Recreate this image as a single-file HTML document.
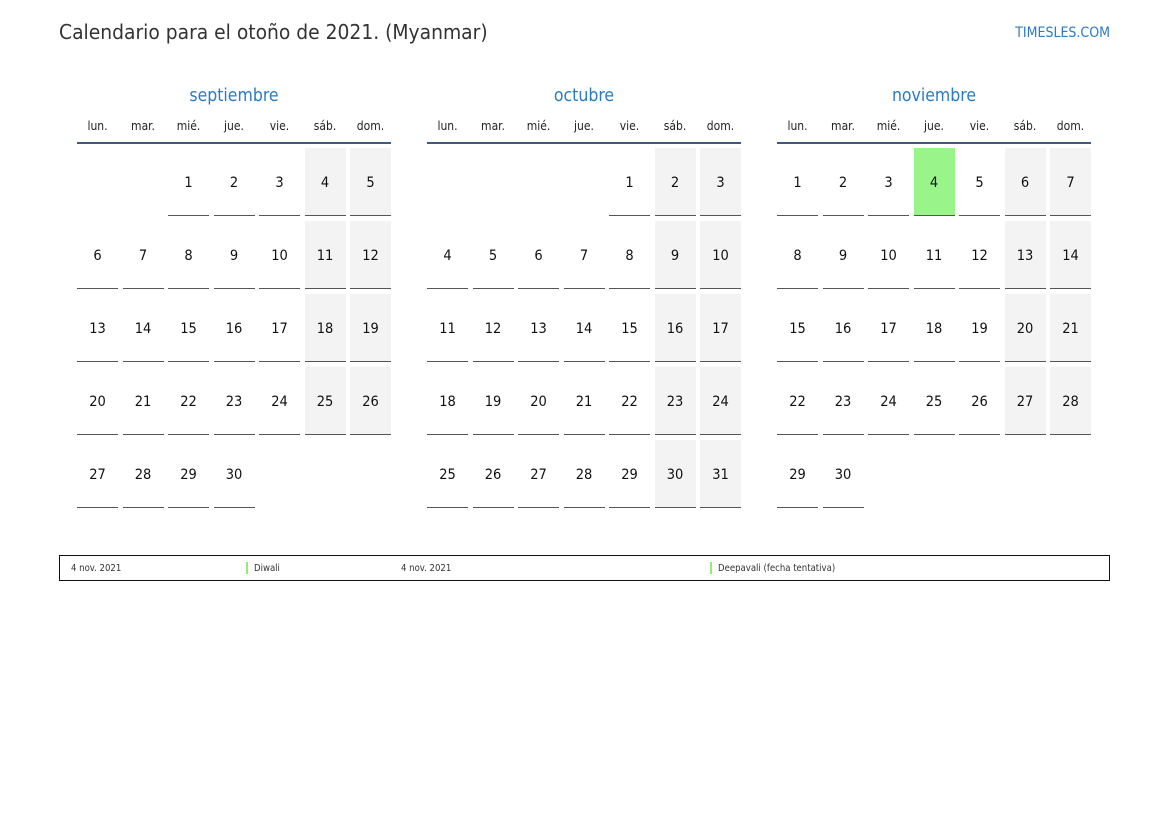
<!DOCTYPE html>
<html><head><meta charset="utf-8"><style>
body{margin:0;width:1169px;height:827px;background:#fff;position:relative;font-family:"DejaVu Sans Condensed","DejaVu Sans","Liberation Sans",sans-serif;overflow:hidden}
.t{position:absolute;left:59px;top:20px;font-size:20.8px;color:#333;white-space:nowrap}
.brand{position:absolute;right:59px;top:25px;font-size:14px;color:#2a7bc4}
.m{position:absolute;top:82px;width:314px}
.mn{text-align:center;font-size:17.5px;color:#2a7bc4;height:24px;line-height:24px;padding-top:2px;box-sizing:border-box}
.wd{display:grid;grid-template-columns:repeat(7,41px);column-gap:4.5px;margin-top:10px;font-size:12px;color:#222;text-align:center;height:20px;line-height:20px}
.hl{height:2px;background:#3d5a85;margin-top:6px}
.g{display:grid;grid-template-columns:repeat(7,41px);column-gap:4.5px;row-gap:5px;margin-top:4px;grid-auto-rows:68px}
.g div{box-sizing:border-box;border-bottom:1.5px solid #555;display:flex;align-items:center;justify-content:center;font-size:14.5px;color:#111;padding-top:3px}
.g div.e{border:none}
.g div.w{background:#f3f3f3}
.g div.h{background:#99f58a}
.leg{position:absolute;left:59px;top:555px;width:1049px;height:24px;border:1px solid #111;font-size:9.5px;color:#333}
.leg span{position:absolute;top:7px;white-space:nowrap}
.bar{position:absolute;top:6px;width:2px;height:12px;background:#8ef07a}
</style></head><body>
<div class="t">Calendario para el otoño de 2021. (Myanmar)</div>
<div class="brand">TIMESLES.COM</div>

<div class="m" style="left:77px">
<div class="mn">septiembre</div>
<div class="wd"><span>lun.</span><span>mar.</span><span>mié.</span><span>jue.</span><span>vie.</span><span>sáb.</span><span>dom.</span></div>
<div class="hl"></div>
<div class="g">
<div class="e"></div><div class="e"></div><div>1</div><div>2</div><div>3</div><div class="w">4</div><div class="w">5</div>
<div>6</div><div>7</div><div>8</div><div>9</div><div>10</div><div class="w">11</div><div class="w">12</div>
<div>13</div><div>14</div><div>15</div><div>16</div><div>17</div><div class="w">18</div><div class="w">19</div>
<div>20</div><div>21</div><div>22</div><div>23</div><div>24</div><div class="w">25</div><div class="w">26</div>
<div>27</div><div>28</div><div>29</div><div>30</div>
</div></div>

<div class="m" style="left:427px">
<div class="mn">octubre</div>
<div class="wd"><span>lun.</span><span>mar.</span><span>mié.</span><span>jue.</span><span>vie.</span><span>sáb.</span><span>dom.</span></div>
<div class="hl"></div>
<div class="g">
<div class="e"></div><div class="e"></div><div class="e"></div><div class="e"></div><div>1</div><div class="w">2</div><div class="w">3</div>
<div>4</div><div>5</div><div>6</div><div>7</div><div>8</div><div class="w">9</div><div class="w">10</div>
<div>11</div><div>12</div><div>13</div><div>14</div><div>15</div><div class="w">16</div><div class="w">17</div>
<div>18</div><div>19</div><div>20</div><div>21</div><div>22</div><div class="w">23</div><div class="w">24</div>
<div>25</div><div>26</div><div>27</div><div>28</div><div>29</div><div class="w">30</div><div class="w">31</div>
</div></div>

<div class="m" style="left:777px">
<div class="mn">noviembre</div>
<div class="wd"><span>lun.</span><span>mar.</span><span>mié.</span><span>jue.</span><span>vie.</span><span>sáb.</span><span>dom.</span></div>
<div class="hl"></div>
<div class="g">
<div>1</div><div>2</div><div>3</div><div class="h">4</div><div>5</div><div class="w">6</div><div class="w">7</div>
<div>8</div><div>9</div><div>10</div><div>11</div><div>12</div><div class="w">13</div><div class="w">14</div>
<div>15</div><div>16</div><div>17</div><div>18</div><div>19</div><div class="w">20</div><div class="w">21</div>
<div>22</div><div>23</div><div>24</div><div>25</div><div>26</div><div class="w">27</div><div class="w">28</div>
<div>29</div><div>30</div>
</div></div>

<div class="leg">
<span style="left:11px">4 nov. 2021</span>
<div class="bar" style="left:186px"></div><span style="left:194px">Diwali</span>
<span style="left:341px">4 nov. 2021</span>
<div class="bar" style="left:650px"></div><span style="left:658px">Deepavali (fecha tentativa)</span>
</div>
</body></html>
